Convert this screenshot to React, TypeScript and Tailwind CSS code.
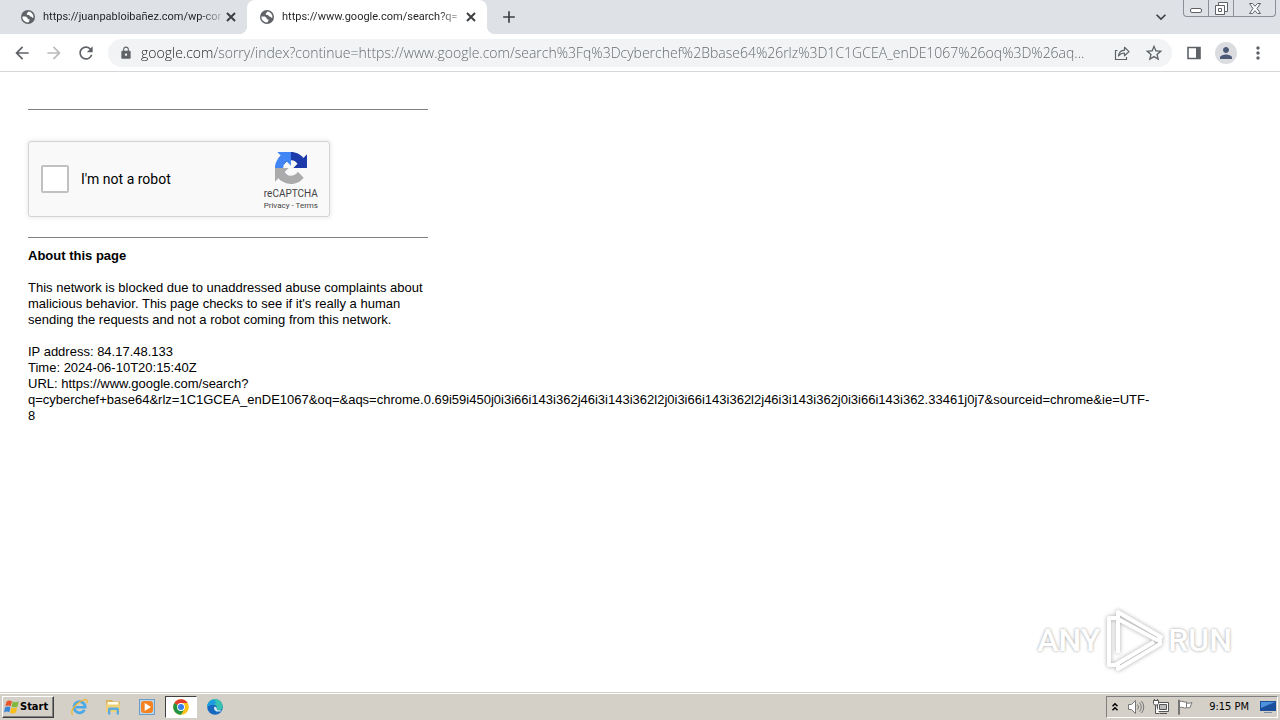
import { MdAdd, MdArrowBack, MdArrowForward, MdExpandMore, MdLock, MdMoreVert, MdPerson, MdRefresh, MdStarBorder } from "react-icons/md";

type Tab = {
  title: string;
  active: boolean;
};

const tabs: Tab[] = [
  { title: "https://juanpabloibañez.com/wp-con", active: false },
  { title: "https://www.google.com/search?q=", active: true },
];

const address =
  "google.com/sorry/index?continue=https://www.google.com/search%3Fq%3Dcyberchef%2Bbase64%26rlz%3D1C1GCEA_enDE1067%26oq%3D%26aq...";

const requestUrl =
  "https://www.google.com/search?q=cyberchef+base64&rlz=1C1GCEA_enDE1067&oq=&aqs=chrome.0.69i59i450j0i3i66i143i362j46i3i143i362l2j0i3i66i143i362l2j46i3i143i362j0i3i66i143i362.33461j0j7&sourceid=chrome&ie=UTF-8";

const details = ["IP address: 84.17.48.133", "Time: 2024-06-10T20:15:40Z", `URL: ${requestUrl}`];

function GlobeIcon() {
  return (
    <svg viewBox="0 0 16 16" className="size-4 shrink-0">
      <circle cx="8" cy="8" r="7" fill="#5f6368" />
      <path d="M8.5 2.6 6.8 4.4v1.3l2.1.2 1.5 1.7 1.6.3.6 1.1.9-.6A5.7 5.7 0 0 0 8.5 2.6Z" fill="#fff" />
      <path d="M2.4 7.4h3.4l1.9 1.5v1.4h1.7v1.4l-1.1 1.8A5.6 5.6 0 0 1 2.4 7.4Z" fill="#fff" />
    </svg>
  );
}

function BrowserTab({ tab }: { tab: Tab }) {
  return (
    <div
      className={`flex h-full items-center rounded-t-lg pr-2 pl-3 ${
        tab.active
          ? "relative w-60 bg-white before:absolute before:bottom-0 before:-left-2 before:size-2 before:bg-[radial-gradient(circle_at_0_0,transparent_8px,white_8px)] after:absolute after:-right-2 after:bottom-0 after:size-2 after:bg-[radial-gradient(circle_at_100%_0,transparent_8px,white_8px)]"
          : "w-[239px]"
      }`}
    >
      <GlobeIcon />
      <span className="ml-[7px] w-[178px] shrink-0 bg-linear-to-r from-[#202124] from-88% to-[#202124]/20 bg-clip-text font-[Roboto,sans-serif] text-[11px] whitespace-nowrap text-transparent">
        {tab.title}
      </span>
      <button aria-label="Close tab" className="ml-auto text-[#3c4043]">
        <svg viewBox="0 0 16 16" className="size-4" fill="none" stroke="currentColor" strokeWidth="2">
          <path d="m4 4 8 8M12 4l-8 8" />
        </svg>
      </button>
    </div>
  );
}

function WindowControls() {
  return (
    <div className="flex h-[17px] self-start rounded-b-sm border border-t-0 border-[#8b8f96] text-[#5f6368]">
      <button aria-label="Minimize" className="flex w-[25px] items-center justify-center border-r border-[#8b8f96]">
        <svg viewBox="0 0 12 12" className="size-3" fill="#fff" stroke="currentColor">
          <rect x=".5" y="6.5" width="11" height="4" rx="1.5" />
        </svg>
      </button>
      <button aria-label="Restore" className="flex w-[25px] items-center justify-center border-r border-[#8b8f96]">
        <svg viewBox="0 0 13 13" className="size-[13px]" fill="#fff" stroke="currentColor">
          <path d="M3.5.5h9v9h-9z" />
          <path d="M.5 3.5h9v9h-9z" />
          <path d="M3.5 6.5h3v3h-3z" />
        </svg>
      </button>
      <button aria-label="Close" className="flex w-[41px] items-center justify-center">
        <svg viewBox="0 0 12 11" className="h-[11px] w-3" fill="#fff" stroke="currentColor" strokeLinejoin="round">
          <path d="M.5.5h3L6 3.3 8.5.5h3L8 5.5l3.5 5h-3L6 7.7 3.5 10.5h-3L4 5.5Z" />
        </svg>
      </button>
    </div>
  );
}

function TabStrip() {
  return (
    <div className="flex h-[34px] bg-[#dee1e6] pl-2">
      {tabs.map((tab) => (
        <BrowserTab key={tab.title} tab={tab} />
      ))}
      <button aria-label="New tab" className="ml-3 text-[#3c4043]">
        <MdAdd className="size-5" />
      </button>
      <button aria-label="Search tabs" className="mr-3 ml-auto text-[#3c4043]">
        <MdExpandMore className="size-5" />
      </button>
      <WindowControls />
      <div className="w-1" />
    </div>
  );
}

function Toolbar() {
  return (
    <div className="flex h-[38px] items-center border-b border-[#d5d7da] bg-white px-3 text-[#5f6368]">
      <button aria-label="Back" className="mr-3">
        <MdArrowBack className="size-5" />
      </button>
      <button aria-label="Forward" className="mr-3 text-[#babcbe]">
        <MdArrowForward className="size-5" />
      </button>
      <button aria-label="Reload" className="mr-3">
        <MdRefresh className="size-5" />
      </button>
      <div className="flex h-7 min-w-0 flex-1 items-center rounded-full bg-[#f1f3f4] pr-2 pl-[11px]">
        <MdLock className="size-[14px] shrink-0" />
        {/* host is drawn darker than the rest of the address */}
        <input
          aria-label="Address"
          readOnly
          value={address}
          className="ml-2 min-w-0 flex-1 bg-linear-to-r from-[#202124] from-[74px] to-[#5f6368] to-[74px] bg-clip-text font-['Open_Sans',sans-serif] text-sm font-light text-transparent outline-none"
        />
        <button aria-label="Share this page" className="mr-3.5 ml-2">
          <svg viewBox="0 0 16 16" className="size-4" fill="none" stroke="currentColor" strokeWidth="1.2">
            <path d="M3.5 5.5H1.5v9h11V12" />
            <path d="M4.5 11c.4-3.6 2.6-5.6 6-5.8V2.3L15 6.6l-4.5 4.2V8C8 8 6 8.9 4.5 11Z" strokeLinejoin="round" />
          </svg>
        </button>
        <button aria-label="Bookmark this tab">
          <MdStarBorder className="size-5" />
        </button>
      </div>
      <button aria-label="Side panel" className="ml-3.5">
        <svg viewBox="0 0 16 16" className="size-4" fill="none">
          <path d="M2 2.5h12v11H2z" stroke="currentColor" strokeWidth="1.6" />
          <path d="M10 2h4v12h-4z" fill="currentColor" />
        </svg>
      </button>
      <button aria-label="Profile" className="ml-[13px] flex size-[22px] items-center justify-center rounded-full bg-[#dadce0] text-[#4c5a78]">
        <MdPerson className="size-[18px]" />
      </button>
      <button aria-label="Menu" className="ml-[11px]">
        <MdMoreVert className="size-5" />
      </button>
    </div>
  );
}

function RecaptchaLogo() {
  return (
    <svg viewBox="0 0 64 64" className="size-8">
      <path
        d="M64 31.955l-.033-1.37V4.687l-7.16 7.16C50.948 4.674 42.033.093 32.05.093c-10.4 0-19.622 4.96-25.458 12.64l11.736 11.86a15.55 15.55 0 0 1 4.754-5.334c2.05-1.6 4.952-2.906 8.968-2.906.485 0 .86.057 1.135.163 4.976.393 9.288 3.14 11.828 7.124l-8.307 8.307L64 31.953"
        fill="#1c3aa9"
      />
      <path
        d="M31.862.094l-1.37.033H4.594l7.16 7.16C4.58 13.147 0 22.06 0 32.046c0 10.4 4.96 19.622 12.64 25.458L24.5 45.768a15.55 15.55 0 0 1-5.334-4.754c-1.6-2.05-2.906-4.952-2.906-8.968 0-.485.057-.86.163-1.135.393-4.976 3.14-9.288 7.124-11.828l8.307 8.307L31.86.095"
        fill="#4285f4"
      />
      <path
        d="M.001 32.045l.033 1.37v25.898l7.16-7.16c5.86 7.173 14.774 11.754 24.76 11.754 10.4 0 19.622-4.96 25.458-12.64l-11.736-11.86a15.55 15.55 0 0 1-4.754 5.334c-2.05 1.6-4.952 2.906-8.968 2.906-.485 0-.86-.057-1.135-.163-4.976-.393-9.288-3.14-11.828-7.124l8.307-8.307-27.3.002"
        fill="#ababab"
      />
    </svg>
  );
}

function Recaptcha() {
  return (
    <div className="flex h-[76px] w-[302px] items-center rounded-[3px] border border-[#d3d3d3] bg-[#f9f9f9] pr-[11px] pl-3 font-[Roboto,sans-serif] shadow-[0_0_4px_1px_rgba(0,0,0,0.08)]">
      <input
        id="robot"
        type="checkbox"
        className="size-7 appearance-none rounded-xs border-2 border-[#c1c1c1] bg-white"
      />
      <label htmlFor="robot" className="ml-3 text-sm text-black">
        I'm not a robot
      </label>
      <div className="ml-auto flex flex-col items-center pt-1.5 text-[#444]">
        <RecaptchaLogo />
        <span className="mt-1 text-[10px] leading-3">reCAPTCHA</span>
        <span className="text-[8px] leading-3">
          <a href="#privacy">Privacy</a> - <a href="#terms">Terms</a>
        </span>
      </div>
    </div>
  );
}

function Watermark() {
  return (
    <div className="mt-auto mr-12 mb-5 flex items-center gap-1 self-end font-[Roboto,sans-serif] text-[32px] leading-none font-medium text-white [text-shadow:0_0_3px_#999]">
      <span>ANY</span>
      <svg viewBox="0 0 60 64" className="h-16 w-[60px] drop-shadow-[0_0_2px_#aaa]" fill="none" stroke="#fff" strokeWidth="4" strokeLinejoin="round">
        <path d="M14 45V4l43 25-4 3-39-21" />
        <path d="M13 10H5v47h6l39-23" />
        <path d="M14 55v6l42-25v-7" />
      </svg>
      <span>RUN</span>
    </div>
  );
}

function SorryPage() {
  return (
    <main className="flex flex-1 flex-col bg-white pl-7 font-['Liberation_Sans',Arial,sans-serif] text-[13px] leading-4 text-black">
      <hr className="mt-[37px] w-[400px] border-[#808080]" />
      <div className="mt-[31px]">
        <Recaptcha />
      </div>
      <hr className="mt-5 w-[400px] border-[#808080]" />
      <h1 className="mt-2.5 font-bold">About this page</h1>
      <p className="mt-4 w-[400px]">
        This network is blocked due to unaddressed abuse complaints about malicious behavior. This page checks to see if
        it's really a human sending the requests and not a robot coming from this network.
      </p>
      <div className="mt-4 mr-32 wrap-break-word">
        {details.map((line) => (
          <p key={line}>{line}</p>
        ))}
      </div>
      <Watermark />
    </main>
  );
}

function WindowsFlag() {
  return (
    <svg viewBox="0 0 16 16" className="size-4">
      <path d="M2.5 2.5C4.5 1 6 1.2 8 2.2L6.8 7.3C5 6.3 3.3 6.3 1.3 7.5Z" fill="#e8572a" />
      <path d="M8.8 2.6c2 .9 4 .9 6-.4l-1.3 5.2c-2 1.2-3.9 1.2-5.9.3Z" fill="#7fb83b" />
      <path d="M1 8.5c2-1.3 3.7-1.3 5.5-.3l-1.2 5C3.5 12.2 1.8 12.2 0 13.5Z" fill="#3a86d6" />
      <path d="M7.3 8.6c2 .9 3.9.9 5.9-.3l-1.2 5.1c-2 1.3-4 1.3-6 .3Z" fill="#f9bd1c" />
    </svg>
  );
}

function ExplorerIcon() {
  return (
    <svg viewBox="0 0 16 16" className="size-[18px]" fill="none">
      <path d="M12.9 10.6a5 5 0 1 1 .6-2.4H5" stroke="#4aa8e6" strokeWidth="2.4" />
      <path d="M2.5 14.8C.5 13.5 2 9 6 5.5S14 .5 15 2c.4.7.2 1.7-.3 2.7" stroke="#f2b632" strokeWidth="1.2" />
    </svg>
  );
}

function FolderIcon() {
  return (
    <svg viewBox="0 0 16 16" className="size-4">
      <path d="M1 1h6l1 1.5h7V13H1Z" fill="#d9b65c" />
      <path d="M2.5 3h11v4h-11z" fill="#fffbe6" />
      <path d="M1 5.5h14V13H1Z" fill="#eed07a" />
      <path d="M3 15.5V10.5C3 9 4 8.5 5 8.5h7c1.2 0 2 .7 2 2v5h-2.4V11H5.4v4.5Z" fill="#5cabdc" />
    </svg>
  );
}

function MediaIcon() {
  return (
    <svg viewBox="0 0 16 16" className="size-4">
      <rect x=".5" y=".5" width="15" height="15" fill="#b9d6ee" stroke="#6d9cc6" />
      <rect x="2" y="2" width="12" height="12" rx="3" fill="#f58220" />
      <path d="M5.7 4v8L12 8Z" fill="#fff" />
    </svg>
  );
}

function ChromeIcon() {
  return (
    <svg viewBox="0 0 16 16" className="size-4">
      <circle cx="8" cy="8" r="7.8" fill="#fbc116" />
      <path d="M8 8 1.25 4.1A7.8 7.8 0 0 1 14.75 4.1H8Z" fill="#e33b2e" />
      <path d="M1.25 4.1A7.8 7.8 0 0 0 8 15.8L11.4 10 8 8Z" fill="#229342" />
      <circle cx="8" cy="8" r="3.9" fill="#fff" />
      <circle cx="8" cy="8" r="3" fill="#3a7ded" />
    </svg>
  );
}

function EdgeIcon() {
  return (
    <svg viewBox="0 0 16 16" className="size-4">
      <circle cx="8" cy="8" r="7.8" fill="#1769c0" />
      <path d="M.2 8A7.8 7.8 0 0 1 15.8 7.5c0 2.3-1.8 3.7-4 3.7-1.5 0-2.3-.6-2-1.3C10.5 8 9.2 5.6 6 5.6 3 5.6.8 7 .2 8Z" fill="#37c2b1" />
      <path d="M.2 8A7.8 7.8 0 0 1 5 .9c4-.6 5 3 2 4.8C4 5.4.8 7 .2 8Z" fill="#1e9de0" />
      <path d="M7.3 8c-.8 2 .7 4.3 3.2 4.6 1.8.1 3-.2 4.2-.9-.4-.1-1.7-.4-2.9-.5-1.5 0-2.3-.6-2-1.3C10.2 8.5 8.5 7 7.3 8Z" fill="#dcecf5" />
    </svg>
  );
}

const pinned = [
  { name: "Internet Explorer", icon: <ExplorerIcon />, running: false },
  { name: "Windows Explorer", icon: <FolderIcon />, running: false },
  { name: "Media Player", icon: <MediaIcon />, running: false },
  { name: "Google Chrome", icon: <ChromeIcon />, running: true },
  { name: "Microsoft Edge", icon: <EdgeIcon />, running: false },
];

function Taskbar() {
  return (
    <footer className="flex h-7 items-center border-t border-[#d4d0c8] bg-[#d4d0c8] font-['DejaVu_Sans_Condensed','DejaVu_Sans',sans-serif] text-[11px] text-black shadow-[inset_0_1px_0_#fff]">
      <button className="ml-0.5 flex h-[22px] w-[52px] items-center border border-t-white border-r-[#404040] border-b-[#404040] border-l-white pl-px font-bold shadow-[inset_-1px_-1px_0_#808080]">
        <WindowsFlag />
        <span className="pt-0.5">Start</span>
      </button>
      <nav className="ml-[9px] flex items-center gap-[2px]">
        {pinned.map((app) => (
          <button
            key={app.name}
            aria-label={app.name}
            className={`flex h-[22px] w-8 items-center justify-center ${
              app.running ? "border border-t-[#404040] border-r-white border-b-white border-l-[#404040] bg-white" : ""
            }`}
          >
            {app.icon}
          </button>
        ))}
      </nav>
      <div className="mr-0.5 ml-auto flex h-[22px] items-center border border-t-[#808080] border-r-white border-b-white border-l-[#808080] pl-1">
        <button aria-label="Show hidden icons">
          <svg viewBox="0 0 8 10" className="h-2.5 w-2" fill="none" stroke="#000" strokeWidth="1.5">
            <path d="m1.5 4.3 2.5-2.5 2.5 2.5M1.5 8.3 4 5.8l2.5 2.5" />
          </svg>
        </button>
        <button aria-label="Volume" className="ml-2">
          <svg viewBox="0 0 18 16" className="h-4 w-[18px]" fill="none" stroke="#777">
            <path d="M1.5 5.5h3l4-4v13l-4-4h-3z" fill="#fff" />
            <path d="M10.5 5.5q2 2.5 0 5M12.5 3.5q3.5 4.5 0 9M14.5 2q4.5 6 0 12" />
          </svg>
        </button>
        <button aria-label="Network" className="ml-2">
          <svg viewBox="0 0 16 16" className="size-4" fill="#fff" stroke="#555">
            <path d="M4.5 3.5h11v9h-11z" />
            <path d="M6.5 5.5h7v5h-7z" fill="#bbb" />
            <path d="M7 14.5h7M2.5 6v8.5h4" />
            <path d="M.5 1.5h5v3l-1 1.5h-3L.5 4.5zM1.5 0v2M4.5 0v2" />
          </svg>
        </button>
        <button aria-label="Action Center" className="ml-2">
          <svg viewBox="0 0 16 16" className="size-4" fill="#fff" stroke="#777">
            <path d="M2.5 2.5c3-1 4 1 7 .5v6c-3 .5-4-1.5-7-.5z" />
            <path d="M9.5 4c2 .3 3.5.3 5.5-.5l-2 5c-1.5.5-2.5.3-3.5 0z" />
            <path d="M1.5 1v14.5h1V1z" />
          </svg>
        </button>
        <time className="ml-4 pt-0.5">9:15 PM</time>
        <button aria-label="Show desktop" className="ml-[11px] mr-px">
          <svg viewBox="0 0 16 16" className="size-4">
            <path d="M0 2h16v10H0z" fill="#1b4f9c" />
            <path d="M1 3h14L1 9z" fill="#4d92dc" />
            <path d="M4 13h8v1H4z" fill="#7d8da3" />
          </svg>
        </button>
      </div>
    </footer>
  );
}

export default function App() {
  return (
    <div className="flex min-h-screen flex-col bg-white">
      <header>
        <TabStrip />
        <Toolbar />
      </header>
      <SorryPage />
      <Taskbar />
    </div>
  );
}
